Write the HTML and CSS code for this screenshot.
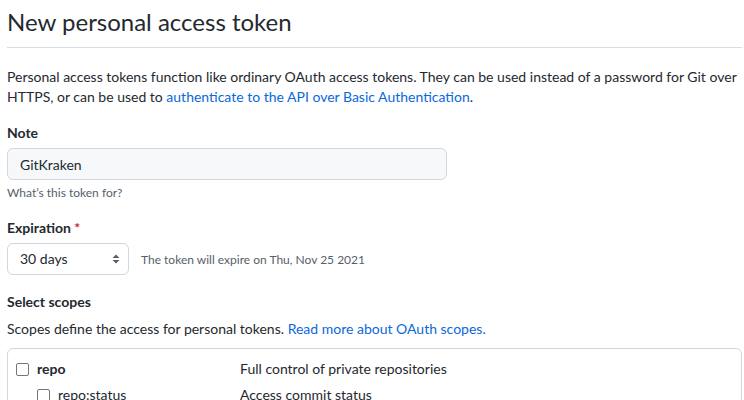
FILE: index.html
```html
<!DOCTYPE html>
<html lang="en">
<head>
<meta charset="utf-8">
<title>New personal access token</title>
<link rel="stylesheet" href="styles.css">
</head>
<body>
<div class="page">
  <h1 class="subhead">New personal access token</h1>
  <p class="intro">Personal access tokens function like ordinary OAuth access tokens. They can be used instead of a password for Git over HTTPS, or can be used to <a href="#">authenticate to the API over Basic Authentication</a>.</p>

  <div class="field">
    <label class="label">Note</label>
    <input class="input" type="text" value="GitKraken">
    <p class="hint">What’s this token for?</p>
  </div>

  <div class="field field-exp">
    <label class="label">Expiration <span class="req">*</span></label>
    <div class="exp-row">
      <div class="select">
        <span>30 days</span>
        <svg class="caret" width="8" height="10" viewBox="0 0 8 10"><path d="M4 0.5 L7.5 4 H0.5 Z M4 9.5 L0.5 6 H7.5 Z" fill="#57606a"/></svg>
      </div>
      <span class="exp-note">The token will expire on Thu, Nov 25 2021</span>
    </div>
  </div>

  <div class="scopes-head">
    <h2 class="label">Select scopes</h2>
    <p class="scopes-desc">Scopes define the access for personal tokens. <a href="#">Read more about OAuth scopes.</a></p>
  </div>

  <div class="scopes">
    <div class="scope-row">
      <span class="scope-name"><span class="cb"></span><b>repo</b></span>
      <span class="scope-desc">Full control of private repositories</span>
    </div>
    <div class="scope-row sub">
      <span class="scope-name"><span class="cb"></span>repo:status</span>
      <span class="scope-desc">Access commit status</span>
    </div>
  </div>
</div>
</body>
</html>
```

FILE: styles.css
```css
* { box-sizing: border-box; }
html, body {
  margin: 0;
  padding: 0;
  background: #ffffff;
}
body {
  font-family: Lato, "Open Sans", "Liberation Sans", sans-serif;
  font-size: 14px;
  line-height: 20px;
  color: #24292f;
  overflow: hidden;
  height: 400px;
}
.page {
  padding: 0 2px 0 7px;
}
a { color: #0969da; text-decoration: none; }

.subhead {
  margin: 0;
  padding: 4px 0 7px;
  font-size: 24px;
  line-height: 36px;
  font-weight: 400;
  border-bottom: 1px solid #d8dee4;
}
.intro {
  margin: 19px 0 0;
}
.field {
  margin-top: 16px;
}
.label {
  display: block;
  margin: 0;
  font-size: 14px;
  line-height: 20px;
  font-weight: 700;
}
.req { color: #cf222e; }
.input {
  display: block;
  margin-top: 5px;
  width: 440px;
  height: 32px;
  padding: 0 12px;
  font: inherit;
  color: #24292f;
  background: #f6f8fa;
  border: 1px solid #d0d7de;
  border-radius: 6px;
  outline: none;
}
.hint {
  margin: 4px 0 0;
  font-size: 12px;
  line-height: 18px;
  color: #57606a;
}
.exp-row {
  margin-top: 5px;
  display: flex;
  align-items: center;
  gap: 12px;
}
.select {
  width: 122px;
  height: 32px;
  padding: 0 8px 0 12px;
  display: flex;
  align-items: center;
  justify-content: space-between;
  border: 1px solid #d0d7de;
  border-radius: 6px;
  background: #ffffff;
}
.exp-note {
  font-size: 12px;
  line-height: 18px;
  margin-top: 2px;
  color: #57606a;
}
.scopes-head {
  margin-top: 17px;
}
.scopes-desc {
  margin: 7px 0 0;
}
.scopes {
  margin-top: 9px;
  border: 1px solid #d0d7de;
  border-radius: 6px;
  padding: 10px 8px;
  display: flex;
  flex-direction: column;
  gap: 6px;
}
.scope-row {
  display: grid;
  grid-template-columns: 224px 1fr;
  align-items: center;
}
.scope-name {
  display: flex;
  align-items: center;
  gap: 8px;
}
.scope-name b { font-weight: 700; }
.scope-row.sub .scope-name { padding-left: 21px; }
.cb {
  width: 13px;
  height: 13px;
  border: 1px solid #767676;
  border-radius: 2px;
  background: #fff;
  flex: none;
}
.scope-desc { color: #24292f; }
```
